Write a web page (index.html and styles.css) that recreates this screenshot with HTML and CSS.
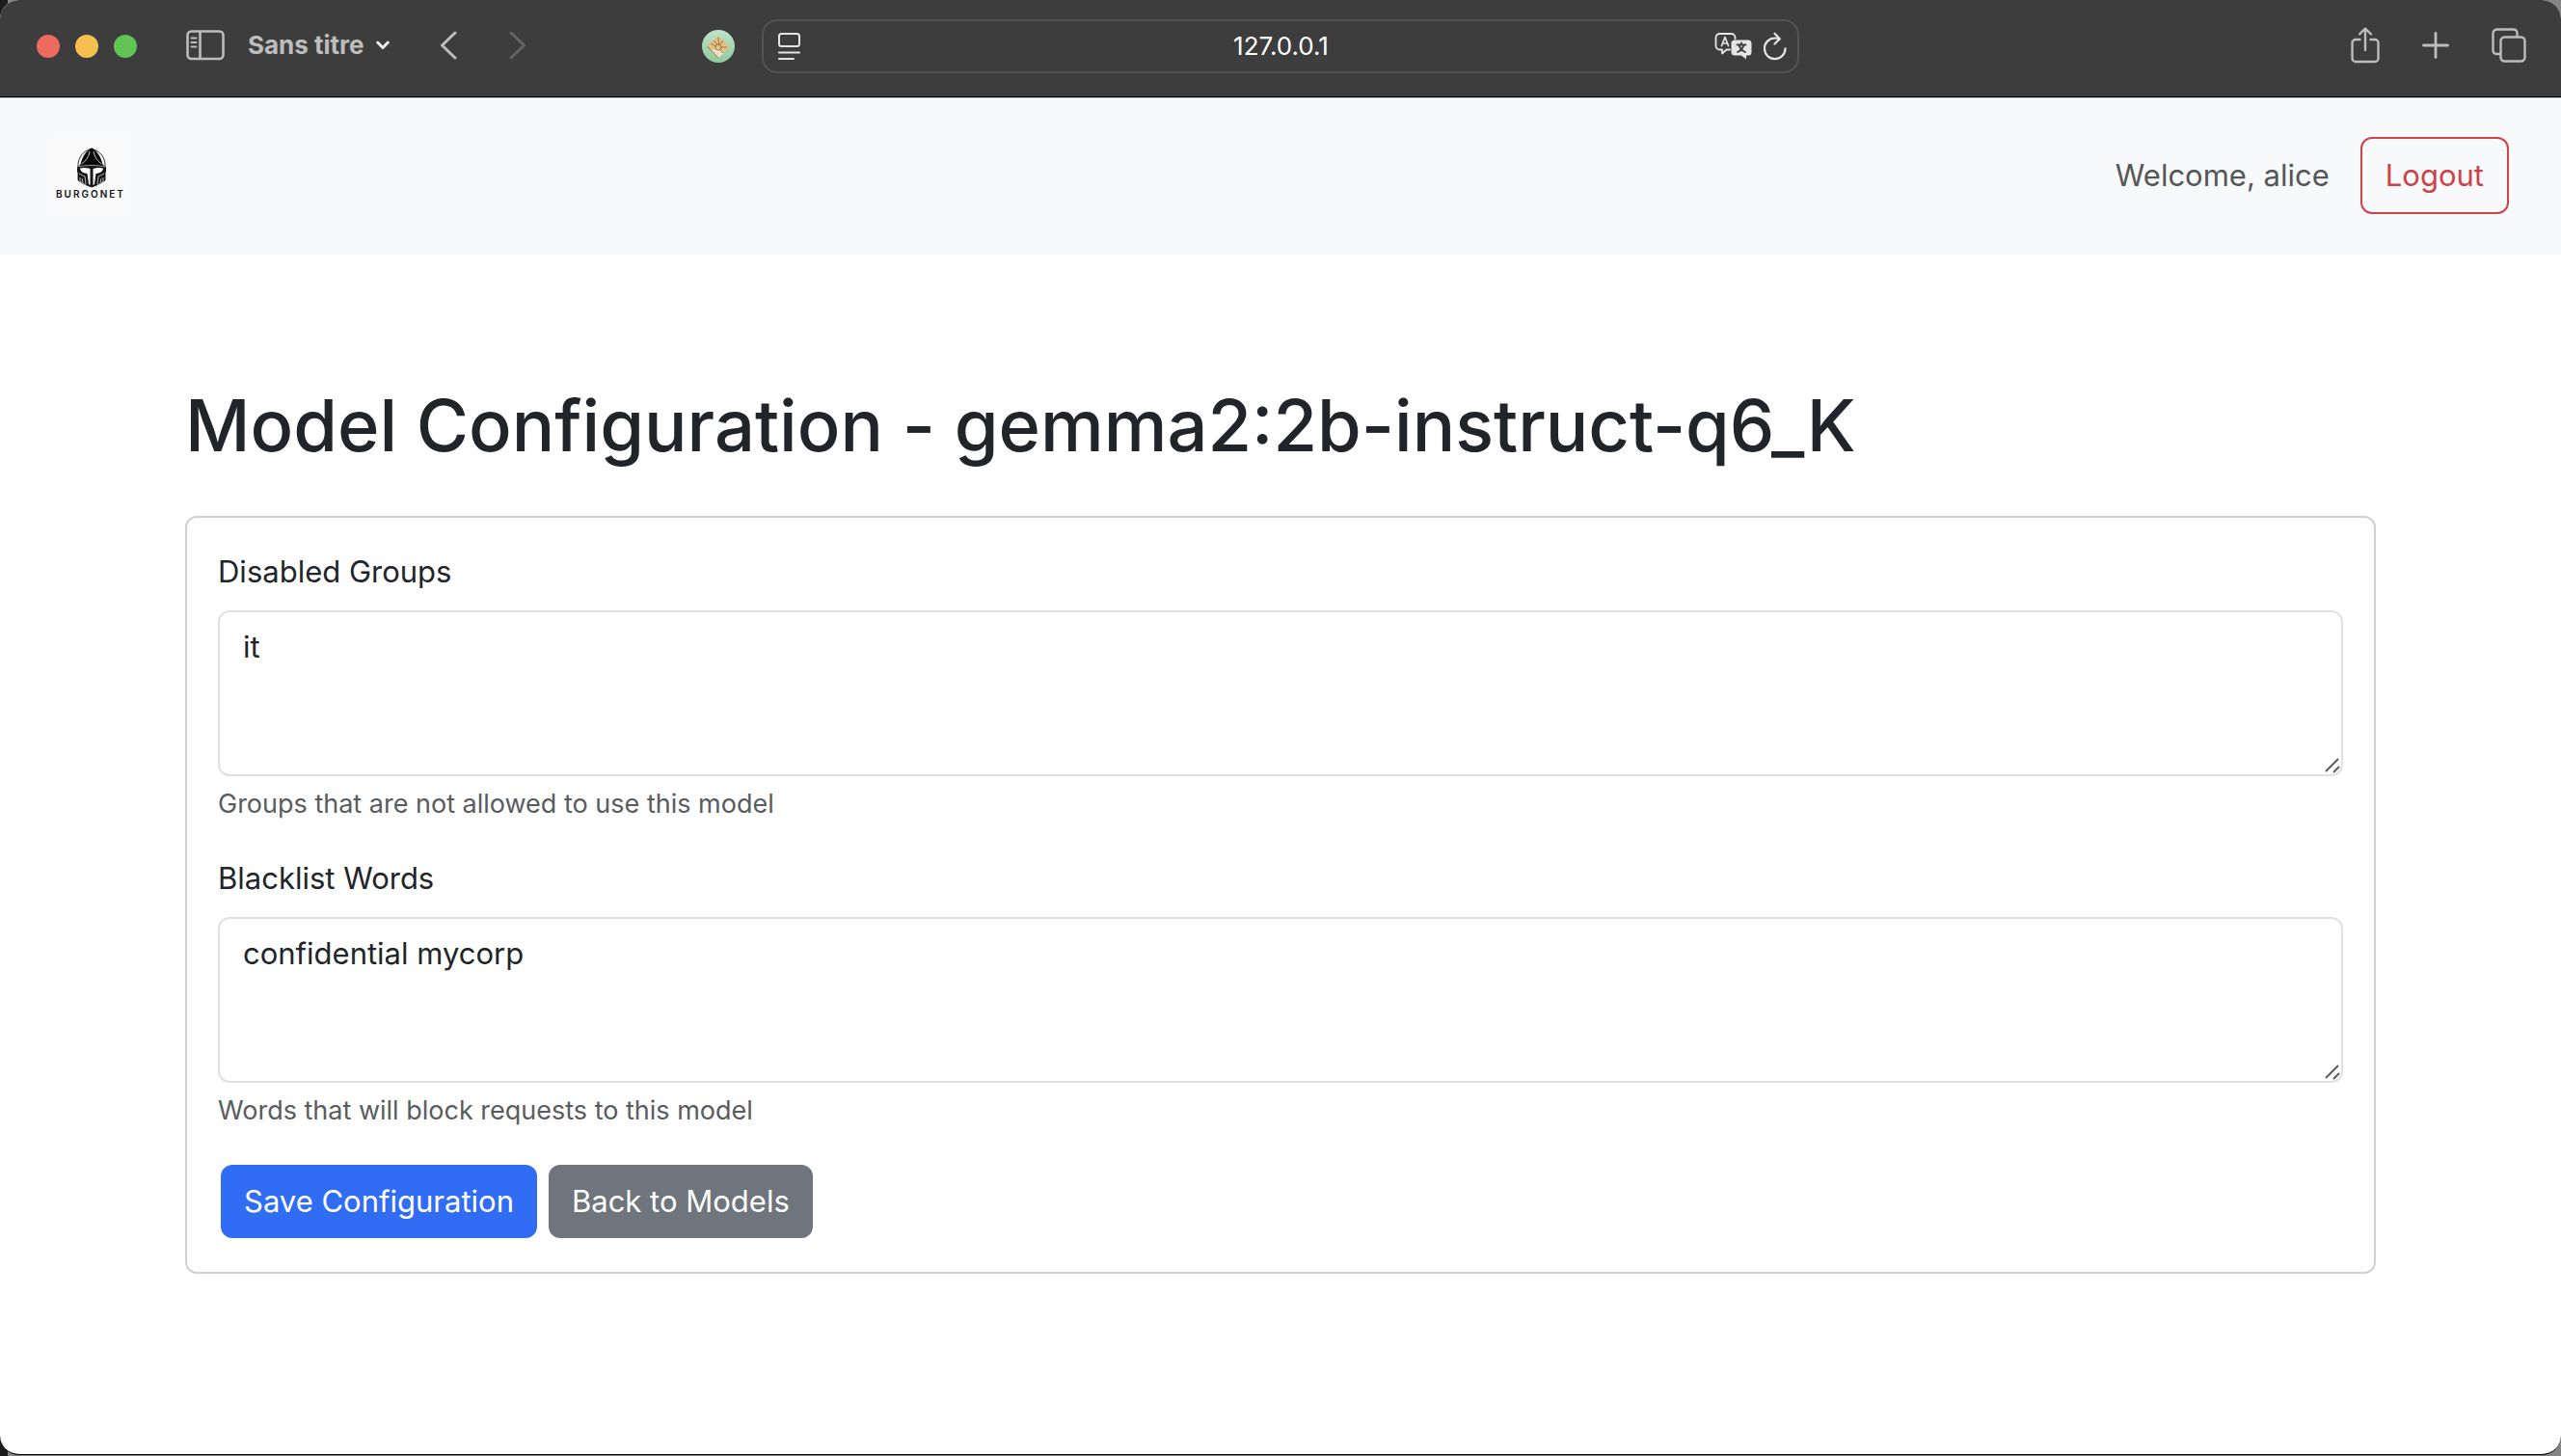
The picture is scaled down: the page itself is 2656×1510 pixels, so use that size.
FILE: index.html
```html
<!DOCTYPE html>
<html lang="en">
<head>
<meta charset="utf-8">
<title>Model Configuration</title>
<link rel="stylesheet" href="styles.css">
</head>
<body>
<div class="window">
  <header class="toolbar">
    <div class="toolbar-left">
      <div class="lights"><span class="light red"></span><span class="light yellow"></span><span class="light green"></span></div>
      <button class="tool sidebar-toggle" aria-label="Sidebar">
        <svg width="40" height="32" viewBox="0 0 40 32" fill="none" stroke="currentColor" stroke-width="2.6"><rect x="1.5" y="1.5" width="37" height="28.5" rx="4"/><path d="M14.5 2v28"/><path d="M5.5 8.5h5M5.5 13h5M5.5 17.500h5" stroke-width="2" stroke-linecap="round"/></svg>
      </button>
      <button class="tool profile">Sans titre
        <svg width="14" height="10" viewBox="0 0 14 10" fill="none" stroke="#ececec" stroke-width="3" stroke-linecap="round" stroke-linejoin="round"><path d="M1.700 2l5.300 5.500L12.300 2"/></svg>
      </button>
      <button class="tool back" aria-label="Back"><svg width="18" height="30" viewBox="0 0 18 30" fill="none" stroke="currentColor" stroke-width="3" stroke-linecap="round" stroke-linejoin="round"><path d="M16 2L2.500 15 16 28"/></svg></button>
      <button class="tool forward" aria-label="Forward"><svg width="18" height="30" viewBox="0 0 18 30" fill="none" stroke="currentColor" stroke-width="3" stroke-linecap="round" stroke-linejoin="round"><path d="M2 2l13.500 13L2 28"/></svg></button>
      <svg class="extension" width="34" height="34" viewBox="0 0 34 34"><defs><linearGradient id="mint" x1="0" y1="0" x2="0" y2="1"><stop offset="0" stop-color="#bfe3c9"/><stop offset="1" stop-color="#8fca9d"/></linearGradient></defs><circle cx="17" cy="17" r="17" fill="url(#mint)"/><path d="M17 6l11.500 12L17 29 5.500 17z" fill="#e9bd7b"/><path d="M9 21l8-2 6 4.500L17 29z" fill="#f3dfc0"/><g fill="none" stroke="#8d7a52" stroke-width="1"><circle cx="17" cy="18" r="3"/><path d="M5.500 17L17 29M9 14l5 3M12 11l4 4M17 8v3l1 4M22 11l-3 4M20 18h6M19 21l3 3"/></g></svg>
    </div>
    <div class="address">
      <svg width="24" height="30" viewBox="0 0 24 30" fill="none" stroke="currentColor" stroke-width="2" stroke-linecap="round"><rect x="1" y="2" width="21" height="13" rx="2.500"/><path d="M1 21.500h21M1 28h15"/></svg>
      <input class="address-input" type="text" value="127.0.0.1" aria-label="Address">
      <div class="address-actions">
        <button class="tool bright" aria-label="Translate"><svg width="40" height="30" viewBox="0 0 40 30" fill="none" stroke="currentColor" stroke-width="1.800" stroke-linecap="round" stroke-linejoin="round"><path d="M16 18.500h-3.500L8 22.500v-4H5.500a4 4 0 0 1-4-4V6a4 4 0 0 1 4-4h12a4 4 0 0 1 4 4v1"/><path d="M7.500 14.500L11 5.500l3.500 9M8.700 12h4.600" stroke-width="1.700"/><path d="M21 8.500h14a3.500 3.500 0 0 1 3.500 3.500v9a3.500 3.500 0 0 1-3.500 3.500h-2v4l-5-4h-7a3.500 3.500 0 0 1-3.500-3.500v-9a3.500 3.500 0 0 1 3.500-3.500z" fill="currentColor" stroke="none"/><path d="M23.500 13.500h9M28 11.500v2M30.500 13.500c-.7 3.500-3 6-6.500 7.500M25.500 13.500c.8 3.500 3 6 6.500 7.500" stroke="#3c3d3c"/></svg></button>
        <button class="tool bright" aria-label="Reload"><svg width="24" height="30" viewBox="0 0 24 30" fill="none" stroke="currentColor" stroke-width="2.200" stroke-linecap="round" stroke-linejoin="round"><path d="M16.500 7.500C15 6.900 13.500 6.500 11.800 6.500a10.800 10.800 0 1 0 10.700 10.800"/><path d="M11.500 1.800l5.200 5.400-5.200 5.400"/></svg></button>
      </div>
    </div>
    <div class="toolbar-right">
      <button class="tool" aria-label="Share"><svg width="30" height="38" viewBox="0 0 30 38" fill="none" stroke="currentColor" stroke-width="2.400" stroke-linecap="round" stroke-linejoin="round"><path d="M9.500 13H5a3.500 3.500 0 0 0-3.500 3.500v16A3.500 3.500 0 0 0 5 36h20a3.500 3.500 0 0 0 3.500-3.500v-16A3.500 3.500 0 0 0 25 13h-4.500"/><path d="M15 24V2M9 7.500L15 1.500l6 6"/></svg></button>
      <button class="tool" aria-label="New tab"><svg width="28" height="28" viewBox="0 0 28 28" fill="none" stroke="currentColor" stroke-width="2.800" stroke-linecap="round"><path d="M14 1.500v25M1.500 14h25"/></svg></button>
      <button class="tool" aria-label="Tabs"><svg width="36" height="36" viewBox="0 0 36 36" fill="none" stroke="currentColor" stroke-width="2.400"><rect x="9.500" y="9.500" width="25" height="25" rx="4"/><path d="M9 27H5a3.500 3.500 0 0 1-3.500-3.500V5.500A4 4 0 0 1 5.500 1.500h17.500A3.500 3.500 0 0 1 26.500 5v4"/></svg></button>
    </div>
  </header>

  <nav class="navbar">
    <a class="brand" href="#" aria-label="Burgonet home">
      <svg width="80" height="80" viewBox="0 0 80 80">
        <rect width="80" height="80" fill="#fafafb"/>
        <path d="M41 12c-9 3-14.500 9-14 19v14c3 2 8 5 14 7 6-2 11-5 14-7V31c.5-10-5-16-14-19z" fill="#f4f4f4" stroke="#333" stroke-width="1"/>
        <path d="M41 11.500c-5 3-9 7-11.500 17l-2.500 2.500h28l-2.500-2.500C50 18.500 46 14.500 41 11.500z" fill="#070707"/>
        <path d="M39 15c-1 6-4 10-8.500 13M43 15c1 6 4 10 8.500 13" stroke="#c4c4c4" stroke-width="1" fill="none"/>
        <path d="M26 31c5-2 10-3 15-3s10 1 15 3v5l-1 1v8c-3 3-8 5-14 7-6-2-11-4-14-7v-8l-1-1z" fill="#161616"/>
        <path d="M26.500 31c5-1 9.500-1.500 14.500-1.500S50.500 30 55.500 31" stroke="#8f8f8f" stroke-width="1" fill="none"/>
        <path d="M29 32.500c4-1 7-.5 10.500.5v17l-1.500-1-1.500-11c-4-.5-7-2-7.500-5.500zM53 32.500c-4-1-7-.5-10.500.5v17l1.500-1 1.500-11c4-.5 7-2 7.500-5.500z" fill="#fff"/>
        <path d="M28 38l6 3 1 8M54 38l-6 3-1 8M29 42v4l6 4M53 42v4l-6 4M31 43l1 4M51 43l-1 4" stroke="#b5b5b5" stroke-width="1" fill="none"/>
        <text class="wordmark" x="4" y="63">BURGONET</text>
      </svg>
    </a>
    <div class="account">
      <span class="welcome">Welcome, alice</span>
      <a class="logout" href="#">Logout</a>
    </div>
  </nav>

  <main class="container">
    <h1>Model Configuration - gemma2:2b-instruct-q6_K</h1>
    <form class="card">
      <div class="field">
        <label for="groups">Disabled Groups</label>
        <div class="area">
          <textarea id="groups">it</textarea>
          <svg class="grip" width="16" height="16" viewBox="0 0 16 16" stroke="#5c5c5c" stroke-width="2"><path d="M1 14L14 1M9 15l6-6"/></svg>
        </div>
        <p class="help">Groups that are not allowed to use this model</p>
      </div>
      <div class="field">
        <label for="words">Blacklist Words</label>
        <div class="area">
          <textarea id="words">confidential mycorp</textarea>
          <svg class="grip" width="16" height="16" viewBox="0 0 16 16" stroke="#5c5c5c" stroke-width="2"><path d="M1 14L14 1M9 15l6-6"/></svg>
        </div>
        <p class="help">Words that will block requests to this model</p>
      </div>
      <div class="actions">
        <button class="btn primary" type="button">Save Configuration</button>
        <a class="btn secondary" href="#">Back to Models</a>
      </div>
    </form>
  </main>
</div>
</body>
</html>
```
FILE: styles.css
```css
* {
  box-sizing: border-box;
}

body {
  margin: 0;
  background: linear-gradient(90deg, #1c1c1c 8px, #858585 8px);
  font-family: Inter, "Liberation Sans", sans-serif;
  font-size: 31px;
  line-height: 48px;
  color: #212529;
}

svg {
  display: block;
  flex: none;
}

.window {
  min-height: calc(100vh - 1px);
  background: #fff;
  border-bottom: 1px solid #000;
  border-radius: 20px;
  overflow: hidden;
}

/* Browser toolbar */
.toolbar {
  display: grid;
  grid-template-columns: 1fr minmax(0, 1076px) 1fr;
  align-items: center;
  height: 101px;
  padding-bottom: 4px;
  background: #3c3d3c;
  border-bottom: 1px solid #000;
  color: #bcbdbc;
}

.toolbar-left,
.toolbar-right,
.lights,
.address,
.address-actions {
  display: flex;
  align-items: center;
}

.toolbar-left {
  padding: 0 28px 0 38px;
}

.lights {
  gap: 16px;
}

.light {
  width: 24px;
  height: 24px;
  border-radius: 50%;
}

.red { background: #ed6a5e; }
.yellow { background: #f4bf4f; }
.green { background: #61c554; }

.tool {
  display: flex;
  align-items: center;
  padding: 0 0 2px;
  border: 0;
  background: none;
  color: inherit;
  font: inherit;
}

.sidebar-toggle {
  margin-left: 51px;
}

.profile {
  gap: 12px;
  margin-left: 24px;
  font-size: 26px;
  font-weight: 700;
  line-height: 32px;
  white-space: nowrap;
}

.back {
  margin-left: 52px;
}

.forward {
  margin-left: 54px;
  color: #636463;
}

.extension {
  margin-left: auto;
}

.address {
  height: 56px;
  padding: 0 11px 0 15px;
  border: 2px solid #535453;
  border-radius: 16px;
  color: #e4e5e4;
}

.address-input {
  flex: 1;
  min-width: 0;
  padding: 0 0 0 48px;
  border: 0;
  background: none;
  color: #fff;
  font: inherit;
  font-size: 26px;
  line-height: 32px;
  text-align: center;
}

.address-actions {
  gap: 11px;
}

.bright {
  padding: 0;
}

.toolbar-right {
  justify-content: flex-end;
  gap: 44px;
  padding-right: 36px;
}

/* Site navigation */
.navbar {
  display: flex;
  align-items: center;
  justify-content: space-between;
  padding: 40px 54px 42px;
  background: #f8f9fb;
  border-top: 1px solid #c8c9ca;
}

.wordmark {
  font-size: 10px;
  font-weight: 600;
  letter-spacing: 2px;
  fill: #111;
}

.account {
  display: flex;
  align-items: center;
  gap: 32px;
}

.welcome {
  color: #555657;
}

.logout {
  padding: 14px 24px;
  border: 2px solid #cb444a;
  border-radius: 12px;
  color: #cb444a;
  text-decoration: none;
}

/* Page content */
.container {
  max-width: 2272px;
  margin: 0 auto;
  padding: 129px 0;
}

h1 {
  margin: 0 0 46px;
  font-size: 74px;
  font-weight: 500;
  line-height: 96px;
}

.card {
  padding: 32px;
  border: 2px solid #d0d1d2;
  border-radius: 12px;
}

.field {
  margin-bottom: 32px;
}

label {
  display: block;
  margin-bottom: 16px;
}

.area {
  position: relative;
}

textarea {
  display: block;
  width: 100%;
  height: 172px;
  padding: 12px 24px;
  border: 2px solid #dee2e6;
  border-radius: 12px;
  color: inherit;
  font: inherit;
  resize: none;
}

.grip {
  position: absolute;
  right: 3px;
  bottom: 3px;
  pointer-events: none;
}

.help {
  margin: 8px 0 0;
  font-size: 27px;
  line-height: 42px;
  color: #595c5f;
}

.actions {
  display: flex;
  gap: 12px;
  padding: 3px;
}

.btn {
  padding: 14px 24px;
  border: 0;
  border-radius: 12px;
  color: #fff;
  font: inherit;
  text-decoration: none;
}

.primary { background: #316cf4; }
.secondary { background: #6e757c; }
```
